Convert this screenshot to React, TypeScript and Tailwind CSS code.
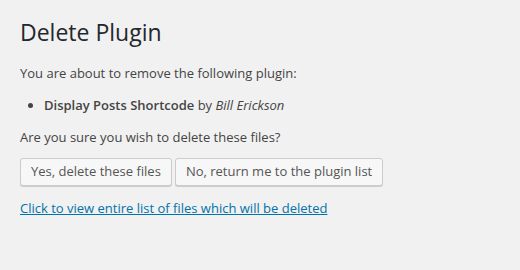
export default function App() {
  return (
    <div className="w-[520px] h-[270px] bg-[#f1f1f1] text-[#444] font-['Open_Sans',sans-serif] px-[20px] pt-[16px]">
      <h1 className="text-[23px] leading-[32px] font-normal text-[#23282d]">Delete Plugin</h1>
      <p className="text-[13px] leading-[20px] mt-[15px]">You are about to remove the following plugin:</p>
      <ul className="list-disc pl-[24px] mt-[12px] text-[13px] leading-[20px]">
        <li>
          <strong className="font-semibold">Display Posts Shortcode</strong> by <em>Bill Erickson</em>
        </li>
      </ul>
      <p className="text-[13px] leading-[20px] mt-[12px]">Are you sure you wish to delete these files?</p>
      <div className="flex gap-[3px] mt-[11px]">
        <button className="h-[28px] px-[10px] text-[13px] text-[#555] bg-[#f7f7f7] border border-[#ccc] rounded-[3px] shadow-[0_1px_0_#ccc]">
          Yes, delete these files
        </button>
        <button className="h-[28px] px-[10px] text-[13px] text-[#555] bg-[#f7f7f7] border border-[#ccc] rounded-[3px] shadow-[0_1px_0_#ccc]">
          No, return me to the plugin list
        </button>
      </div>
      <p className="text-[13px] leading-[20px] mt-[12px]">
        <a href="#" className="text-[#0073aa] underline">Click to view entire list of files which will be deleted</a>
      </p>
    </div>
  );
}
